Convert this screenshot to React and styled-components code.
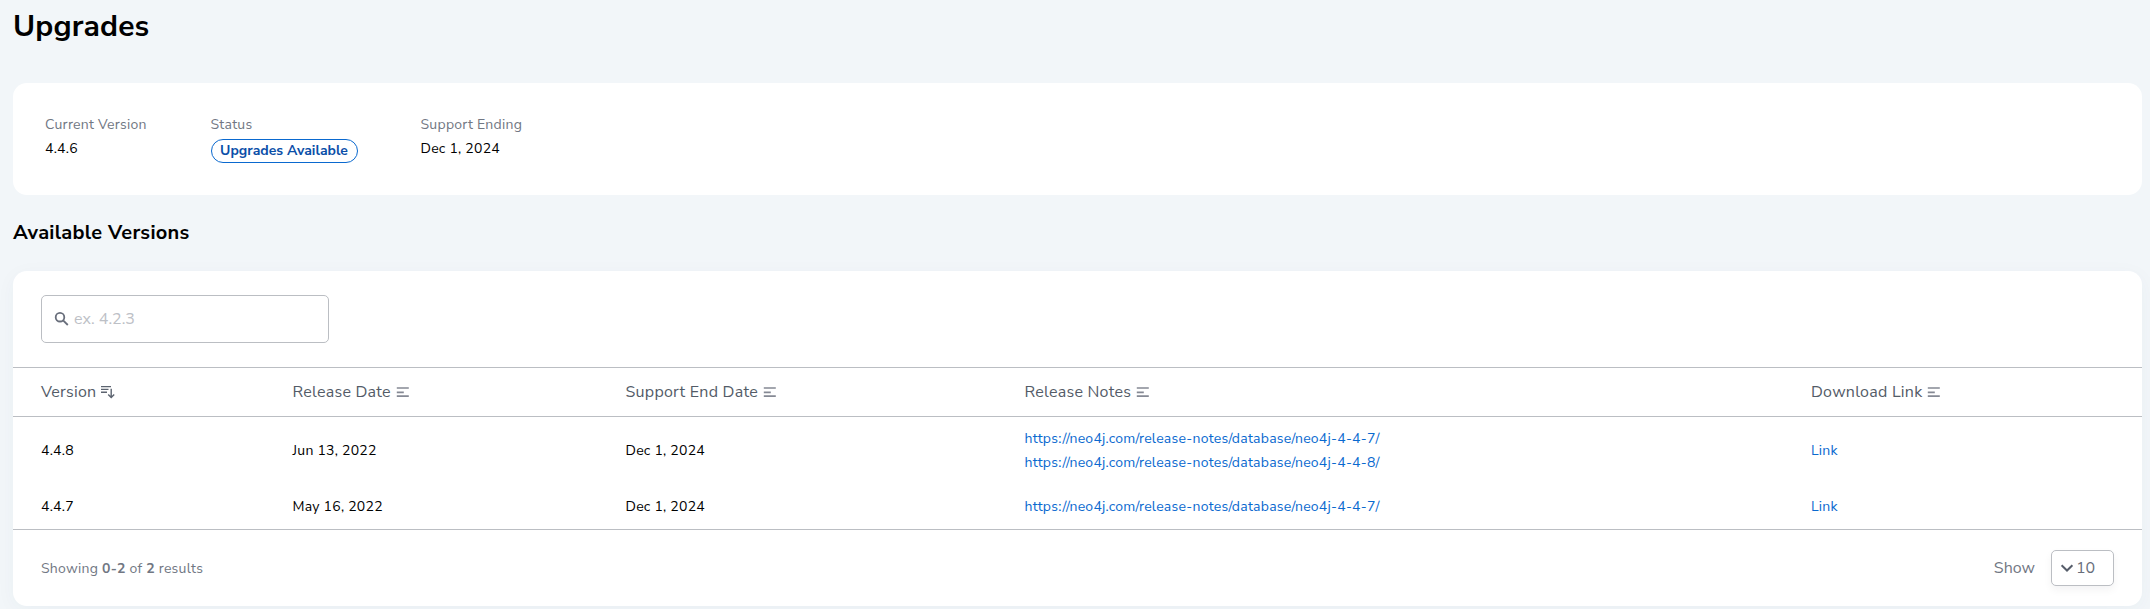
import React from "react";
import styled, { createGlobalStyle } from "styled-components";

const GlobalStyle = createGlobalStyle`
  *, *::before, *::after { box-sizing: border-box; }
  body {
    margin: 0;
    background: #f2f6f9;
    color: #000;
    font-family: "Nunito Sans", "Open Sans", sans-serif;
    font-size: 14px;
    line-height: 24px;
    letter-spacing: 0.25px;
  }
`;

const Page = styled.main`
  height: 609px;
  padding: 7px 8px 0 13px;
  overflow: hidden;
`;

const Title = styled.h1`
  margin: 0 0 36px;
  font-size: 30px;
  line-height: 40px;
  font-weight: 700;
  letter-spacing: 0.15px;
`;

const SectionTitle = styled.h2`
  margin: 24px 0;
  font-size: 20px;
  line-height: 28px;
  font-weight: 700;
  letter-spacing: 0.25px;
`;

const Card = styled.section`
  background: #fff;
  border-radius: 14px;
  box-shadow: ${(p) => (p.$raised ? "0 4px 20px rgba(30, 70, 100, 0.04)" : "none")};
`;

const Summary = styled(Card)`
  display: flex;
  height: 112px;
  padding: 30px 32px 0;
`;

const Fact = styled.div`
  width: ${(p) => p.$width}px;
`;

const FactLabel = styled.div`
  color: #717783;
`;

const Badge = styled.span`
  display: block;
  width: 147px;
  height: 24px;
  margin-top: 2px;
  border: 1px solid #0a69cf;
  border-radius: 12px;
  color: #0b4fa8;
  font-weight: 700;
  line-height: 22px;
  letter-spacing: 0;
  text-align: center;
`;

const Toolbar = styled.div`
  padding: 24px 28px;
`;

const SearchBox = styled.label`
  display: flex;
  align-items: center;
  gap: 4px;
  width: 288px;
  height: 48px;
  padding: 0 12px;
  border: 1px solid #bbbec3;
  border-radius: 5px;
  color: #686e7b;
`;

const SearchInput = styled.input`
  flex: 1;
  min-width: 0;
  padding: 0;
  border: 0;
  outline: 0;
  background: none;
  font: 16px/24px "Nunito Sans", "Open Sans", sans-serif;
  &::placeholder { color: #bdc0c6; opacity: 1; }
`;

const Table = styled.table`
  width: 100%;
  border-collapse: separate;
  border-spacing: 0;
  table-layout: fixed;
`;

const HeadCell = styled.th`
  width: ${(p) => p.$width};
  height: 50px;
  padding: 0 0 0 ${(p) => p.$inset || 0}px;
  border-top: 1px solid #bbbec3;
  border-bottom: 1px solid #bbbec3;
  color: #535b67;
  font-size: 16px;
  font-weight: 400;
  text-align: left;
`;

const HeadContent = styled.span`
  display: flex;
  align-items: center;
  gap: 4px;
`;

const Row = styled.tr`
  height: ${(p) => p.$height}px;
`;

const Cell = styled.td`
  padding: 0 0 0 ${(p) => p.$inset || 0}px;
  vertical-align: middle;
`;

const Link = styled.a`
  display: block;
  width: max-content;
  color: #0a69cf;
  text-decoration: none;
`;

const Footer = styled.footer`
  display: flex;
  align-items: center;
  justify-content: space-between;
  height: 77px;
  padding: 0 28px;
  border-top: 1px solid #bbbec3;
  color: #717783;
`;

const ResultCount = styled.span`
  padding-top: 2px;
`;

const PageSize = styled.div`
  display: flex;
  align-items: center;
  gap: 16px;
  font-size: 16px;
  letter-spacing: 0;
`;

const Select = styled.button`
  display: flex;
  align-items: center;
  gap: 1px;
  width: 63px;
  height: 36px;
  padding: 0 7px;
  border: 1px solid #bbbec3;
  border-radius: 5px;
  background: #fff;
  box-shadow: 0 4px 8px rgba(12, 26, 37, 0.05);
  color: #686e7b;
  font: inherit;
`;

const SearchIcon = () => (
  <svg width="16" height="16" viewBox="0 0 16 16" fill="none" stroke="currentColor" strokeWidth="1.8">
    <circle cx="6" cy="6.2" r="4.3" />
    <path d="M9.1 9.3 13.8 14" />
  </svg>
);

const SortIcon = () => (
  <svg width="16" height="16" viewBox="0 0 16 16" fill="none" stroke="#858994" strokeWidth="1.7">
    <path d="M1.8 4h12M1.8 8.3h7M1.8 12.2h12" />
  </svg>
);

const SortedIcon = () => (
  <svg width="16" height="16" viewBox="0 0 16 16" fill="none" stroke="#5d6470" strokeWidth="1.4">
    <path d="M1 2.6h10M1 5.4h7.5M1 8.2h6M11.2 4.8v8.4M8.2 10.4l3 3 3-3" />
  </svg>
);

const ChevronIcon = () => (
  <svg width="16" height="16" viewBox="0 0 16 16" fill="none" stroke="#565d6a" strokeWidth="2">
    <path d="M2.6 5.3 8 10.5l5.4-5.2" />
  </svg>
);

const columns = [
  { title: "Version", width: "279.5px", inset: 28, sorted: true },
  { title: "Release Date", width: "333px" },
  { title: "Support End Date", width: "399px" },
  { title: "Release Notes", width: "786.5px" },
  { title: "Download Link", width: "auto" },
];

const notesUrl = (v) => `https://neo4j.com/release-notes/database/neo4j-${v}/`;

const versions = [
  { version: "4.4.8", released: "Jun 13, 2022", ends: "Dec 1, 2024", notes: ["4-4-7", "4-4-8"], height: 68 },
  { version: "4.4.7", released: "May 16, 2022", ends: "Dec 1, 2024", notes: ["4-4-7"], height: 44 },
];

export default function App() {
  return (
    <>
      <GlobalStyle />
      <Page>
        <Title>Upgrades</Title>
        <Summary>
          <Fact $width={165.5}>
            <FactLabel>Current Version</FactLabel>
            4.4.6
          </Fact>
          <Fact $width={210}>
            <FactLabel>Status</FactLabel>
            <Badge>Upgrades Available</Badge>
          </Fact>
          <Fact $width={160}>
            <FactLabel>Support Ending</FactLabel>
            Dec 1, 2024
          </Fact>
        </Summary>
        <SectionTitle>Available Versions</SectionTitle>
        <Card $raised>
          <Toolbar>
            <SearchBox>
              <SearchIcon />
              <SearchInput placeholder="ex. 4.2.3" />
            </SearchBox>
          </Toolbar>
          <Table>
            <thead>
              <tr>
                {columns.map((c) => (
                  <HeadCell key={c.title} $width={c.width} $inset={c.inset}>
                    <HeadContent>
                      {c.title}
                      {c.sorted ? <SortedIcon /> : <SortIcon />}
                    </HeadContent>
                  </HeadCell>
                ))}
              </tr>
            </thead>
            <tbody>
              {versions.map((v) => (
                <Row key={v.version} $height={v.height}>
                  <Cell $inset={28}>{v.version}</Cell>
                  <Cell>{v.released}</Cell>
                  <Cell>{v.ends}</Cell>
                  <Cell>
                    {v.notes.map((n) => (
                      <Link key={n} href={notesUrl(n)}>{notesUrl(n)}</Link>
                    ))}
                  </Cell>
                  <Cell><Link href="#">Link</Link></Cell>
                </Row>
              ))}
            </tbody>
          </Table>
          <Footer>
            <ResultCount>Showing <b>0-2</b> of <b>2</b> results</ResultCount>
            <PageSize>
              Show
              <Select><ChevronIcon />10</Select>
            </PageSize>
          </Footer>
        </Card>
      </Page>
    </>
  );
}
